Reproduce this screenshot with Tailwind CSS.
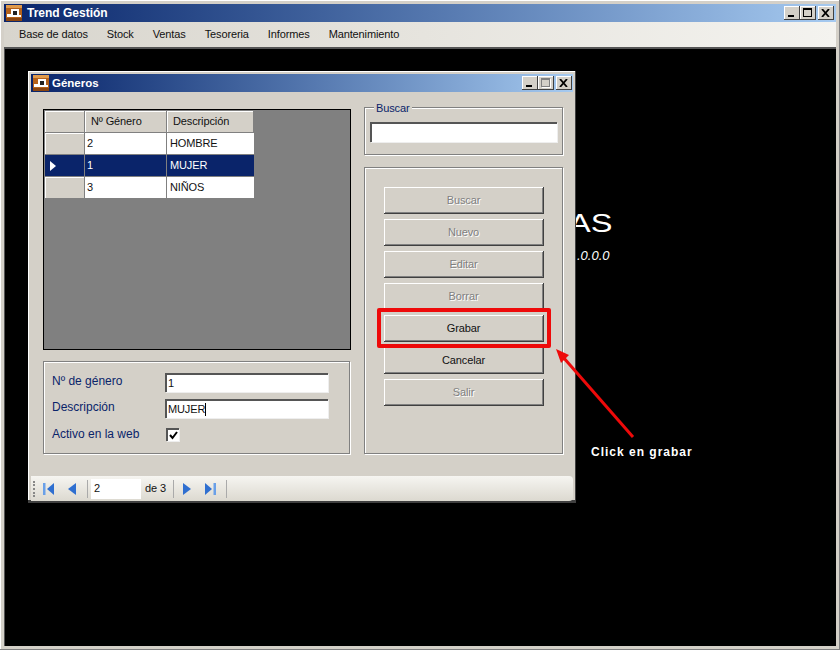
<!doctype html>
<html><head><meta charset="utf-8"><script src="https://cdn.jsdelivr.net/npm/@tailwindcss/browser@4"></script></head>
<body class="m-0 bg-black">
<div class="relative w-[840px] h-[650px] overflow-hidden flex flex-col bg-[#d4d0c8] border-r border-b border-[#808080] pt-[4px] pl-[4px] pr-[3px] pb-[3px] shadow-[inset_1px_1px_0_#fff] font-['Liberation_Sans',sans-serif] text-[11px] tracking-[-0.12px] text-[#111]">
  <div class="h-[18px] shrink-0 flex items-center pl-[2px] gap-[5px] bg-gradient-to-r from-[#0a246a] to-[#a6caf0] text-white font-bold text-[12px] tracking-normal">
    <svg width="16" height="16" viewBox="0 0 16 16"><rect width="16" height="16" fill="#b5621a"/><rect width="16" height="3" fill="#e09a4a"/><rect y="13" width="16" height="3" fill="#8a4510"/><rect x="1" y="9" width="5" height="3" fill="#fff"/><rect x="5" y="4" width="8" height="8" fill="#fff"/><rect x="13" y="10" width="2" height="2" fill="#fff"/><rect x="7" y="6" width="4" height="4" fill="#222"/></svg>
    <span>Trend Gestión</span>
  </div>
  <div class="h-[25px] shrink-0 flex items-center pl-[15px] gap-[19px] bg-gradient-to-r from-[#d8d5cd] to-[#f4f3ef]">
    <span>Base de datos</span><span>Stock</span><span>Ventas</span><span>Tesoreria</span><span>Informes</span><span>Mantenimiento</span>
  </div>
  <div class="flex-1 bg-black border-t-2 border-[#555] border-l border-[#555]"></div>

  <div class="absolute top-[4px] right-[3px] flex h-[18px] items-center pr-[2px]">
    <div class="w-[16px] h-[14px] bg-[#d4d0c8] border-b border-r border-[#404040] shadow-[inset_1px_1px_0_#fff] flex items-end pl-[4px] pb-[2px]"><div class="w-[6px] h-[2px] bg-black"></div></div>
    <div class="w-[16px] h-[14px] bg-[#d4d0c8] border-b border-r border-[#404040] shadow-[inset_1px_1px_0_#fff] flex items-center justify-center"><div class="w-[9px] h-[9px] border border-black border-t-2"></div></div>
    <div class="ml-[2px] w-[16px] h-[14px] bg-[#d4d0c8] border-b border-r border-[#404040] shadow-[inset_1px_1px_0_#fff] flex items-center justify-center"><svg width="9" height="8" viewBox="0 0 9 8"><path d="M1 0L8 8M8 0L1 8" stroke="#000" stroke-width="1.8"/></svg></div>
  </div>

  <div class="absolute left-[569px] top-[208px] text-white text-[26px] leading-[30px] origin-left scale-x-[1.25] tracking-normal">AS</div>
  <div class="absolute left-[577px] top-[248px] text-white text-[13px] leading-[16px] italic tracking-normal">.0.0.0</div>

  <div class="absolute left-[28px] top-[71px] w-[548px] h-[432px] bg-[#d4d0c8] border-r border-b-[3px] border-r-[#404040] border-b-[#404040] pt-[3px] pl-[3px] pr-[2px] flex flex-col shadow-[inset_1px_1px_0_#fff]">
    <div class="h-[18px] shrink-0 flex items-center pl-[2px] gap-[3px] bg-gradient-to-r from-[#0a246a] to-[#a6caf0] text-white font-bold text-[12px] tracking-normal">
      <svg width="16" height="16" viewBox="0 0 16 16"><rect width="16" height="16" fill="#b5621a"/><rect width="16" height="3" fill="#e09a4a"/><rect y="13" width="16" height="3" fill="#8a4510"/><rect x="1" y="9" width="5" height="3" fill="#fff"/><rect x="5" y="4" width="8" height="8" fill="#fff"/><rect x="13" y="10" width="2" height="2" fill="#fff"/><rect x="7" y="6" width="4" height="4" fill="#222"/></svg>
      <span class="text-[11.5px] mt-[1px]">Géneros</span>
      <div class="ml-auto flex items-center pr-[1px]">
        <div class="w-[16px] h-[14px] bg-[#d4d0c8] border-b border-r border-[#404040] shadow-[inset_1px_1px_0_#fff] flex items-end pl-[4px] pb-[2px]"><div class="w-[6px] h-[2px] bg-black"></div></div>
        <div class="w-[16px] h-[14px] bg-[#d4d0c8] border-b border-r border-[#404040] shadow-[inset_1px_1px_0_#fff] flex items-center justify-center"><div class="w-[9px] h-[9px] border border-[#808080] border-t-2 shadow-[1px_1px_0_#fff]"></div></div>
        <div class="ml-[2px] w-[16px] h-[14px] bg-[#d4d0c8] border-b border-r border-[#404040] shadow-[inset_1px_1px_0_#fff] flex items-center justify-center"><svg width="9" height="8" viewBox="0 0 9 8"><path d="M1 0L8 8M8 0L1 8" stroke="#000" stroke-width="1.8"/></svg></div>
      </div>
    </div>

    <div class="h-[384px] shrink-0 flex gap-[13px] pl-[12px]">
      <div class="w-[308px] pt-[17px] flex flex-col gap-[11px]">
        <div class="h-[241px] border border-black bg-[#808080] p-[1px]">
          <div class="grid grid-cols-[40px_82px_87px] grid-rows-[22px_22px_22px_21px] w-[209px]">
            <div class="bg-[#d4d0c8] border-r border-b border-[#808080] shadow-[inset_1px_1px_0_#fff]"></div>
            <div class="bg-[#d4d0c8] border-r border-b border-[#808080] shadow-[inset_1px_1px_0_#fff] flex items-center pl-[6px]">Nº Género</div>
            <div class="bg-[#d4d0c8] border-r border-b border-[#808080] shadow-[inset_1px_1px_0_#fff] flex items-center pl-[6px]">Descripción</div>

            <div class="bg-[#d4d0c8] border-r border-b border-[#808080] shadow-[inset_1px_1px_0_#fff]"></div>
            <div class="bg-white border-r border-b border-[#808080] flex items-center pl-[2px]">2</div>
            <div class="bg-white border-b border-[#808080] flex items-center pl-[3px]">HOMBRE</div>

            <div class="bg-[#0a246a] border-r border-b border-[#808080] flex items-center pl-[5px]"><svg width="6" height="10" viewBox="0 0 6 10"><path d="M0 0L6 5L0 10Z" fill="#fff"/></svg></div>
            <div class="bg-[#0a246a] text-white border-r border-b border-[#808080] flex items-center pl-[2px]">1</div>
            <div class="bg-[#0a246a] text-white border-b border-[#808080] flex items-center pl-[3px]">MUJER</div>

            <div class="bg-[#d4d0c8] border-r border-[#808080] shadow-[inset_1px_1px_0_#fff]"></div>
            <div class="bg-white border-r border-[#808080] flex items-center pl-[2px]">3</div>
            <div class="bg-white flex items-center pl-[3px]">NIÑOS</div>
          </div>
        </div>
        <div class="w-[307px] h-[93px] border border-[#808080] shadow-[inset_1px_1px_0_#fff,1px_1px_0_#fff] text-[#0a246a] grid grid-cols-[113px_163px] auto-rows-[26px] pl-[8px] pt-[7px] items-center">
          <span class="-mt-[3px] text-[12px] tracking-normal">Nº de género</span>
          <div class="h-[19px] bg-white border-t-2 border-l-2 border-[#555] shadow-[1px_1px_0_#eee] flex items-center pl-[1px] text-[#111]">1</div>
          <span class="-mt-[2px] text-[12px] tracking-normal">Descripción</span>
          <div class="h-[19px] bg-white border-t-2 border-l-2 border-[#555] shadow-[1px_1px_0_#eee] flex items-center pl-[1px] text-[#111]">MUJER<span class="inline-block w-px h-[13px] bg-black"></span></div>
          <span class="text-[12px] tracking-normal">Activo en la web</span>
          <div class="ml-px w-[13px] h-[13px] bg-white border-t-2 border-l-2 border-[#555] shadow-[1px_1px_0_#eee] flex items-center justify-center"><svg width="9" height="9" viewBox="0 0 9 9"><path d="M1 4L3.5 7L8 1" fill="none" stroke="#000" stroke-width="2"/></svg></div>
        </div>
      </div>

      <div class="w-[199px] pt-[15px] flex flex-col gap-[12px]">
        <div class="relative h-[48px] border border-[#808080] shadow-[inset_1px_1px_0_#fff,1px_1px_0_#fff] pl-[5px] pr-[5px] pt-[14px]">
          <span class="absolute left-[9px] -top-[7px] px-[2px] bg-[#d4d0c8] text-[#0a246a] leading-[14px]">Buscar</span>
          <div class="h-[20px] bg-white border-t-2 border-l-2 border-[#555] shadow-[1px_1px_0_#eee]"></div>
        </div>
        <div class="h-[287px] border border-[#808080] shadow-[inset_1px_1px_0_#fff,1px_1px_0_#fff] pl-[19px] pr-[18px] pt-[19px] flex flex-col gap-[5px]">
          <div class="h-[27px] shrink-0 flex items-center justify-center bg-[#d4d0c8] border-r border-b border-[#404040] shadow-[inset_1px_1px_0_#fff,inset_-1px_-1px_0_#808080] text-[#808080] [text-shadow:1px_1px_0_#fff]">Buscar</div>
          <div class="h-[27px] shrink-0 flex items-center justify-center bg-[#d4d0c8] border-r border-b border-[#404040] shadow-[inset_1px_1px_0_#fff,inset_-1px_-1px_0_#808080] text-[#808080] [text-shadow:1px_1px_0_#fff]">Nuevo</div>
          <div class="h-[27px] shrink-0 flex items-center justify-center bg-[#d4d0c8] border-r border-b border-[#404040] shadow-[inset_1px_1px_0_#fff,inset_-1px_-1px_0_#808080] text-[#808080] [text-shadow:1px_1px_0_#fff]">Editar</div>
          <div class="h-[27px] shrink-0 flex items-center justify-center bg-[#d4d0c8] border-r border-b border-[#404040] shadow-[inset_1px_1px_0_#fff,inset_-1px_-1px_0_#808080] text-[#808080] [text-shadow:1px_1px_0_#fff]">Borrar</div>
          <div class="h-[27px] shrink-0 flex items-center justify-center bg-[#d4d0c8] border-r border-b border-[#404040] shadow-[inset_1px_1px_0_#fff,inset_-1px_-1px_0_#808080]">Grabar</div>
          <div class="h-[27px] shrink-0 flex items-center justify-center bg-[#d4d0c8] border-r border-b border-[#404040] shadow-[inset_1px_1px_0_#fff,inset_-1px_-1px_0_#808080]">Cancelar</div>
          <div class="h-[27px] shrink-0 flex items-center justify-center bg-[#d4d0c8] border-r border-b border-[#404040] shadow-[inset_1px_1px_0_#fff,inset_-1px_-1px_0_#808080] text-[#808080] [text-shadow:1px_1px_0_#fff]">Salir</div>
        </div>
      </div>
    </div>

    <div class="h-[25px] shrink-0 flex items-center bg-gradient-to-b from-[#f6f5f1] to-[#dcd9d0] rounded-r-[4px] pl-[2px]">
      <div class="w-[3px] h-[16px] border-l-2 border-dotted border-[#888]"></div>
      <svg class="ml-[7px]" width="11" height="12" viewBox="0 0 11 12"><rect width="2.5" height="12" fill="#6aa0e8"/><path d="M11 0V12L4 6Z" fill="#2f6fd0"/></svg>
      <svg class="ml-[14px]" width="8" height="12" viewBox="0 0 8 12"><path d="M8 0V12L0 6Z" fill="#2f6fd0"/></svg>
      <div class="ml-[11px] w-px h-[18px] bg-[#aaa]"></div>
      <div class="ml-[3px] w-[50px] h-[20px] bg-white flex items-center pl-[3px]">2</div>
      <span class="ml-[4px] w-[21px] whitespace-nowrap">de 3</span>
      <div class="ml-[7px] w-px h-[18px] bg-[#aaa]"></div>
      <svg class="ml-[9px]" width="8" height="12" viewBox="0 0 8 12"><path d="M0 0V12L8 6Z" fill="#2f6fd0"/></svg>
      <svg class="ml-[14px]" width="11" height="12" viewBox="0 0 11 12"><path d="M0 0V12L7 6Z" fill="#2f6fd0"/><rect x="8.5" width="2.5" height="12" fill="#6aa0e8"/></svg>
      <div class="ml-[10px] w-px h-[18px] bg-[#aaa]"></div>
    </div>
  </div>

  <div class="absolute left-[377px] top-[308px] w-[174px] h-[40px] border-[4px] border-[#ee0a0a] rounded-[2px]"></div>
  <svg class="absolute left-0 top-0 pointer-events-none" width="840" height="650" viewBox="0 0 840 650"><line x1="633" y1="437" x2="563" y2="357" stroke="#ee0a0a" stroke-width="3"/><path d="M556 349L569 355L561 363Z" fill="#ee0a0a"/></svg>
  <div class="absolute left-[591px] top-[445px] text-white font-bold text-[12px] tracking-[1px] leading-[14px]">Click en grabar</div>
</div>
</body></html>
